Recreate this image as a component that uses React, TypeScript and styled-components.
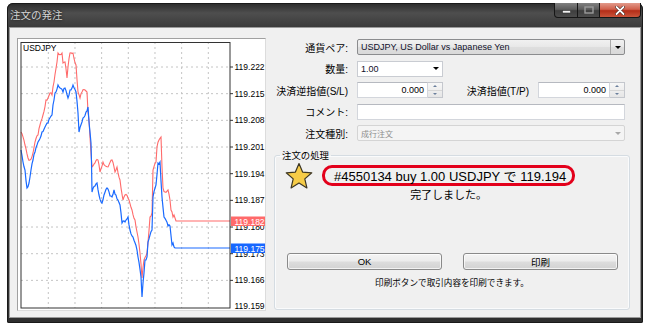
import React from "react";
import styled, { createGlobalStyle } from "styled-components";

const GlobalStyle = createGlobalStyle`
  html, body {
    margin: 0;
    padding: 0;
    background: #fff;
  }
  body {
    font-family: "Liberation Sans", "Noto Sans CJK JP", sans-serif;
  }
`;

const Page = styled.div`
  width: 650px;
  height: 330px;
  padding: 3px 7px 0;
  box-sizing: border-box;
`;

const Window = styled.div`
  width: 636px;
  height: 320px;
  box-sizing: border-box;
  display: flex;
  flex-direction: column;
  padding: 0 2px 5px;
  border-radius: 6px 6px 2px 2px;
  background: linear-gradient(180deg, #2a2a2a 0px, #4e4e4e 10px, #3b3b3b 24px, #2f2f2f 100%);
  box-shadow: inset 0 0 0 1px #1a1a1a;
`;

const TitleBar = styled.div`
  height: 24px;
  display: flex;
  justify-content: space-between;
  align-items: flex-start;
`;

const Title = styled.span`
  margin: 4px 0 0 1px;
  font-family: "Noto Sans CJK JP", sans-serif;
  font-size: 10.5px;
  line-height: 16px;
  color: #d4d4d4;
  text-shadow: 0 0 3px rgba(0, 0, 0, 0.8);
`;

const Controls = styled.div`
  display: flex;
`;

const CtrlButton = styled.div<{ $w: number; $close?: boolean }>`
  width: ${p => p.$w}px;
  height: 15px;
  box-sizing: border-box;
  margin-left: -1px;
  display: flex;
  align-items: center;
  justify-content: center;
  border: 1px solid #161616;
  border-top: none;
  background: ${p =>
    p.$close
      ? "linear-gradient(180deg, #e29a8b 0%, #d0604b 45%, #b42d18 55%, #c9543a 100%)"
      : "linear-gradient(180deg, #808080 0%, #5c5c5c 45%, #3e3e3e 55%, #4c4c4c 100%)"};
  &:first-child {
    border-bottom-left-radius: 4px;
  }
  &:last-child {
    border-bottom-right-radius: 4px;
  }
`;

const Client = styled.div`
  flex: 1;
  display: flex;
  gap: 8px;
  padding: 10px 10px 6px 7px;
  background: #f0f0f0;
  border: 1px solid #9a9a9a;
`;

const ChartPanel = styled.div`
  width: 249px;
  height: 273px;
  box-sizing: border-box;
  background: #fff;
  border: 1px solid #a0a0a0;
  border-right-color: #dcdcdc;
  border-bottom-color: #dcdcdc;
  svg {
    display: block;
  }
`;

const RightColumn = styled.div`
  flex: 1;
  display: flex;
  flex-direction: column;
  padding-top: 1px;
`;

const Row = styled.div`
  display: flex;
  align-items: center;
  height: 16px;
  margin-bottom: 5.5px;
  padding-right: 5px;
`;

const Label = styled.div`
  width: 79px;
  flex: none;
  box-sizing: border-box;
  padding-right: 5px;
  margin-right: 4px;
  text-align: right;
  font-size: 10px;
  color: #000;
  white-space: nowrap;
`;

const SideLabel = styled(Label)`
  flex: 1;
  width: auto;
  padding-right: 9px;
  margin-right: 0;
`;

const TextBox = styled.div<{ $w?: number; $right?: boolean }>`
  ${p => (p.$w ? `width: ${p.$w}px; flex: none;` : "flex: 1;")}
  height: 16px;
  box-sizing: border-box;
  display: flex;
  align-items: center;
  justify-content: ${p => (p.$right ? "flex-end" : "flex-start")};
  padding: 0 3px;
  background: #fff;
  border: 1px solid #d3d6dc;
  border-top-color: #b6b9c0;
  font-size: 9px;
  color: #000;
`;

const SpinBox = styled.div<{ $w: number }>`
  width: ${p => p.$w}px;
  flex: none;
  height: 16px;
  display: flex;
`;

const Spinner = styled.div`
  width: 15px;
  height: 16px;
  box-sizing: border-box;
  display: flex;
  flex-direction: column;
  border: 1px solid #c4c7cd;
  border-left: none;
  background: linear-gradient(180deg, #f7f7f7, #e6e6e6);
`;

const SpinHalf = styled.div<{ $down?: boolean }>`
  flex: 1;
  display: flex;
  align-items: center;
  justify-content: center;
  border-top: ${p => (p.$down ? "1px solid #d6d6d6" : "none")};
  &::after {
    content: "";
    border-left: 2.5px solid transparent;
    border-right: 2.5px solid transparent;
    ${p => (p.$down ? "border-top: 2.5px solid #6a7f9c;" : "border-bottom: 2.5px solid #6a7f9c;")}
  }
`;

const ComboBox = styled.div<{ $w?: number; $variant: "readonly" | "edit" | "disabled" }>`
  ${p => (p.$w ? `width: ${p.$w}px; flex: none;` : "flex: 1;")}
  height: 16px;
  box-sizing: border-box;
  display: flex;
  align-items: center;
  font-size: 9px;
  border-radius: ${p => (p.$variant === "edit" ? "0" : "2px")};
  border: 1px solid
    ${p => (p.$variant === "readonly" ? "#8b8c8e" : p.$variant === "edit" ? "#c9ccd2" : "#d4d4d4")};
  background: ${p =>
    p.$variant === "readonly"
      ? "linear-gradient(180deg, #f1f1f1 0%, #e8e8e8 50%, #dedede 51%, #d9d9d9 100%)"
      : p.$variant === "edit"
      ? "#fff"
      : "#f4f4f4"};
  color: ${p => (p.$variant === "disabled" ? "#8d8d8d" : "#10102a")};
`;

const ComboText = styled.span<{ $small?: boolean }>`
  flex: 1;
  padding-left: 3px;
  white-space: nowrap;
  font-size: ${p => (p.$small ? "8px" : "9px")};
`;

const ArrowPart = styled.span<{ $split?: boolean; $muted?: boolean }>`
  width: 13px;
  height: 100%;
  display: flex;
  align-items: center;
  justify-content: center;
  border-left: ${p => (p.$split ? "1px solid #a9a9a9" : "none")};
  &::after {
    content: "";
    border-left: 3px solid transparent;
    border-right: 3px solid transparent;
    border-top: 3px solid ${p => (p.$muted ? "#a8a8a8" : "#000")};
  }
`;

const GroupBox = styled.fieldset`
  flex: 1;
  margin: 2.5px 0 1px;
  padding: 0;
  min-width: 0;
  display: flex;
  flex-direction: column;
  border: 1px solid #d5dce2;
  border-radius: 3px;
  box-shadow: inset 0 0 0 1px #fafbfc;
`;

const Legend = styled.legend`
  margin-left: 5px;
  padding: 0 2px;
  font-size: 9.4px;
  line-height: 13px;
  color: #000;
`;

const MessageRow = styled.div`
  display: flex;
  align-items: flex-start;
  gap: 9px;
  padding-left: 10px;
`;

const MessageCol = styled.div`
  display: flex;
  flex-direction: column;
  align-items: center;
`;

const Highlight = styled.div`
  height: 21px;
  box-sizing: border-box;
  margin-top: 3px;
  padding: 0 6px 0 9px;
  display: flex;
  align-items: center;
  border: 3px solid #e3001b;
  border-radius: 10px;
  font-size: 13px;
  color: #000;
  white-space: nowrap;
`;

const Done = styled.div`
  margin-top: 2px;
  font-size: 11px;
  line-height: 14px;
  color: #000;
`;

const Spacer = styled.div`
  flex: 1;
`;

const ButtonRow = styled.div`
  display: flex;
  gap: 21px;
  padding: 0 11px 0 12px;
  margin-bottom: 8px;
`;

const Button = styled.div`
  flex: 1;
  height: 17px;
  box-sizing: border-box;
  display: flex;
  align-items: center;
  justify-content: center;
  border: 1px solid #8a8a8a;
  border-radius: 3px;
  background: linear-gradient(180deg, #f4f4f4 0%, #ececec 48%, #dddddd 52%, #d2d2d2 100%);
  box-shadow: inset 0 0 0 1px rgba(255, 255, 255, 0.7);
  font-size: 9.5px;
  color: #000;
`;

const Note = styled.div`
  margin-bottom: 20px;
  text-align: center;
  font-size: 8.6px;
  line-height: 11px;
  color: #000;
`;

// price chart -------------------------------------------------------------

const bluePts: number[][] = [
  [21, 150], [23, 162], [25, 170], [27, 188], [29, 183], [30, 177], [31, 170],
  [33, 160], [35, 152], [38, 142], [42, 132], [45, 127], [48, 123], [52, 115],
  [53, 105], [55, 93], [58, 85], [60, 88], [63, 92], [65, 88], [68, 98], [70, 90],
  [73, 85], [76, 92], [78, 113], [79, 132], [82, 122], [83, 118], [86, 112],
  [88, 107], [89, 122], [91, 143], [91.5, 163], [92, 192], [95, 186], [97, 183],
  [99, 195], [102, 203], [104, 195], [107, 188], [110, 196], [112, 197], [114, 190],
  [116, 195], [118, 200], [120, 205], [122, 223], [125, 222], [128, 217], [130, 230],
  [133, 237], [137, 250], [138, 257], [141, 277], [142, 297], [143, 283], [145, 260],
  [147, 257], [148, 242], [152, 230], [153, 197], [156, 185], [158, 163], [160, 162],
  [162, 197], [164, 217], [168, 226], [170, 226], [172, 245], [173, 243], [175, 248],
  [230, 248],
];

const redPts: number[][] = [
  [21, 132], [25, 145], [28, 158], [30, 160], [33, 153], [35, 142], [38, 135],
  [40, 125], [43, 115], [46, 100], [48, 98], [50, 93], [52, 95], [54, 82], [57, 62],
  [58, 53], [62, 53], [63, 63], [65, 62], [67, 78], [68, 67], [70, 53], [73, 53],
  [76, 65], [78, 92], [80, 98], [82, 92], [85, 90], [87, 92], [88, 112], [89, 120],
  [92, 167], [95, 163], [98, 160], [100, 172], [103, 162], [108, 167], [112, 160],
  [115, 172], [117, 167], [120, 180], [123, 200], [125, 195], [128, 198], [132, 210],
  [135, 220], [138, 237], [140, 253], [142, 278], [144, 260], [147, 253], [150, 217],
  [152, 213], [153, 170], [156, 162], [157, 147], [159, 140], [161, 137], [162, 167],
  [163, 188], [165, 192], [168, 190], [170, 200], [171, 210], [173, 217], [174, 215],
  [176, 221], [230, 221],
];

const jagged = (pts: number[][], seed: number) => {
  let d = `M${pts[0][0]},${pts[0][1]}`;
  for (let i = 1; i < pts.length; i++) {
    const [x0, y0] = pts[i - 1];
    const [x1, y1] = pts[i];
    const steps = Math.max(1, Math.round(x1 - x0));
    for (let s = 1; s <= steps; s++) {
      const t = s / steps;
      const x = x0 + (x1 - x0) * t;
      let y = y0 + (y1 - y0) * t;
      if (s < steps && x < 175) y += Math.sin((x + seed) * 12.9898) * 1.6;
      d += ` L${x.toFixed(1)},${y.toFixed(1)}`;
    }
  }
  return d;
};

const levels = ["119.222", "119.215", "119.208", "119.201", "119.194", "119.187", "119.180", "119.173", "119.166"];
const step = 26.67;

const PriceChart = () => (
  <svg width="247" height="271" viewBox="18 39 247 271">
    <rect x="18" y="39" width="247" height="271" fill="#fff" />
    {[0, 1, 2, 3, 4, 5, 6].map(i => (
      <line key={`v${i}`} x1={48.3 + i * step} y1="42" x2={48.3 + i * step} y2="308" stroke="#c4c4c4" strokeDasharray="2 3" />
    ))}
    {levels.map((_, i) => (
      <line key={`h${i}`} x1="21" y1={67 + i * step} x2="230" y2={67 + i * step} stroke="#c4c4c4" strokeDasharray="2 3" />
    ))}
    <path d={jagged(redPts, 3)} fill="none" stroke="#ff6b6b" strokeWidth="1.1" />
    <path d={jagged(bluePts, 7)} fill="none" stroke="#1a6aff" strokeWidth="1.2" />
    <rect x="21" y="42.5" width="209" height="265.5" fill="none" stroke="#333" strokeWidth="1" />
    <text x="23" y="50.5" fontSize="8.5" fontFamily="Liberation Sans, sans-serif" fill="#000">USDJPY</text>
    {levels.map((l, i) => (
      <g key={l}>
        <line x1="230" y1={67 + i * step} x2="233" y2={67 + i * step} stroke="#333" />
        <text x="234.5" y={70 + i * step} fontSize="8.5" fontFamily="Liberation Sans, sans-serif" fill="#000">{l}</text>
      </g>
    ))}
    <text x="234.5" y="308.5" fontSize="8.5" fontFamily="Liberation Sans, sans-serif" fill="#000">119.159</text>
    <rect x="231" y="216.5" width="35" height="9.5" fill="#ff6a6a" />
    <text x="234.5" y="224.8" fontSize="8.5" fontFamily="Liberation Sans, sans-serif" fill="#fff">119.182</text>
    <rect x="231" y="243.5" width="35" height="9.5" fill="#1767ff" />
    <text x="234.5" y="251.8" fontSize="8.5" fontFamily="Liberation Sans, sans-serif" fill="#fff">119.175</text>
  </svg>
);

const Star = () => (
  <svg width="28" height="28" viewBox="0 0 28 28">
    <polygon
      points="14,1.5 17.6,10.1 26.8,10.8 19.8,16.9 21.9,25.9 14,21.1 6.1,25.9 8.2,16.9 1.2,10.8 10.4,10.1"
      fill="#f6cc48"
      stroke="#3c3624"
      strokeWidth="1.2"
      strokeLinejoin="round"
    />
  </svg>
);

const SpinField = ({ w, value }: { w: number; value: string }) => (
  <SpinBox $w={w}>
    <TextBox $right>{value}</TextBox>
    <Spinner>
      <SpinHalf />
      <SpinHalf $down />
    </Spinner>
  </SpinBox>
);

const App = () => (
  <>
    <GlobalStyle />
    <Page>
      <Window>
        <TitleBar>
          <Title>注文の発注</Title>
          <Controls>
            <CtrlButton $w={24}>
              <svg width="9" height="8" viewBox="0 0 9 8">
                <rect x="0.5" y="4.5" width="8" height="2.5" fill="#f2f2f2" stroke="#333" strokeWidth="0.6" />
              </svg>
            </CtrlButton>
            <CtrlButton $w={23}>
              <svg width="10" height="8" viewBox="0 0 10 8">
                <rect x="1" y="1" width="8" height="6" fill="none" stroke="#9a9a9a" strokeWidth="1.4" />
              </svg>
            </CtrlButton>
            <CtrlButton $w={42} $close>
              <svg width="10" height="9" viewBox="0 0 10 9">
                <path d="M1.5 1 L8.5 8 M8.5 1 L1.5 8" stroke="#3a1a14" strokeWidth="3" strokeLinecap="round" />
                <path d="M1.5 1 L8.5 8 M8.5 1 L1.5 8" stroke="#fff" strokeWidth="1.8" strokeLinecap="round" />
              </svg>
            </CtrlButton>
          </Controls>
        </TitleBar>
        <Client>
          <ChartPanel>
            <PriceChart />
          </ChartPanel>
          <RightColumn>
            <Row>
              <Label>通貨ペア:</Label>
              <ComboBox $variant="readonly">
                <ComboText>USDJPY, US Dollar vs Japanese Yen</ComboText>
                <ArrowPart $split />
              </ComboBox>
            </Row>
            <Row>
              <Label>数量:</Label>
              <ComboBox $variant="edit" $w={86}>
                <ComboText>1.00</ComboText>
                <ArrowPart />
              </ComboBox>
            </Row>
            <Row>
              <Label>決済逆指値(S/L)</Label>
              <SpinField w={86} value="0.000" />
              <SideLabel>決済指値(T/P)</SideLabel>
              <SpinField w={87} value="0.000" />
            </Row>
            <Row>
              <Label>コメント:</Label>
              <TextBox />
            </Row>
            <Row>
              <Label>注文種別:</Label>
              <ComboBox $variant="disabled">
                <ComboText $small>成行注文</ComboText>
                <ArrowPart $muted />
              </ComboBox>
            </Row>
            <GroupBox>
              <Legend>注文の処理</Legend>
              <MessageRow>
                <Star />
                <MessageCol>
                  <Highlight>#4550134 buy 1.00 USDJPY で 119.194</Highlight>
                  <Done>完了しました。</Done>
                </MessageCol>
              </MessageRow>
              <Spacer />
              <ButtonRow>
                <Button>OK</Button>
                <Button>印刷</Button>
              </ButtonRow>
              <Note>印刷ボタンで取引内容を印刷できます。</Note>
            </GroupBox>
          </RightColumn>
        </Client>
      </Window>
    </Page>
  </>
);

export default App;
